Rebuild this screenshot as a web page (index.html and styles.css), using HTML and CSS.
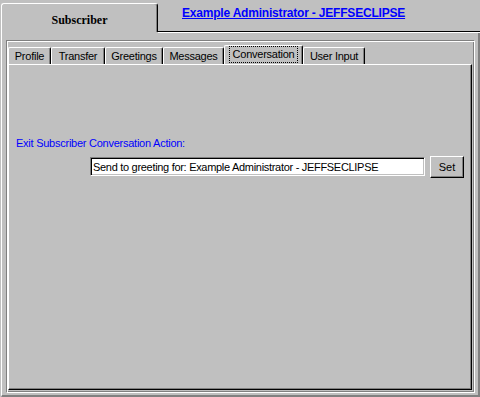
FILE: index.html
```html
<!DOCTYPE html>
<html lang="en">
<head>
  <meta charset="UTF-8">
  <meta name="viewport" content="width=device-width, initial-scale=1">
  <title>Subscriber</title>
  <link rel="stylesheet" href="styles.css">
</head>
<body>

  <div class="header">
    <div class="main-tab">Subscriber</div>
    <div class="header-rest">
      <a href="#" class="admin-link">Example Administrator - JEFFSECLIPSE</a>
    </div>
  </div>

  <div class="frame">
    <div class="group">
      <div class="tabs">
        <div class="tab tab-profile">Profile</div>
        <div class="tab tab-transfer">Transfer</div>
        <div class="tab tab-greetings">Greetings</div>
        <div class="tab tab-messages">Messages</div>
        <div class="tab tab-conversation active"><span class="focus">Conversation</span></div>
        <div class="tab tab-input">User Input</div>
      </div>
      <div class="panel">
        <label class="field-label" for="action">Exit Subscriber Conversation Action:</label>
        <div class="field-row">
          <input id="action" class="text-box" type="text" value="Send to greeting for: Example Administrator - JEFFSECLIPSE">
          <button class="btn">Set</button>
        </div>
      </div>
    </div>
  </div>

</body>
</html>
```

FILE: styles.css
```css
html, body {
  margin: 0;
  padding: 0;
}
body {
  background: #c0c0c0;
  width: 480px;
  height: 397px;
  overflow: hidden;
  font-family: "Liberation Sans", Arial, sans-serif;
  font-size: 11px;
  letter-spacing: -0.25px;
  color: #000;
}
.header {
  display: flex;
  height: 32px;
}
.main-tab {
  box-sizing: border-box;
  width: 157px;
  height: 29px;
  margin-top: 3px;
  margin-left: 1px;
  border-top: 1px solid #fff;
  border-left: 1px solid #fff;
  border-right: 1px solid #000;
  box-shadow: inset -1px 0 0 #808080;
  border-radius: 3px 3px 0 0;
  text-align: center;
  padding-top: 9px;
  font-family: "Liberation Serif", "Times New Roman", serif;
  font-weight: bold;
  font-size: 12px;
  letter-spacing: 0;
}
.header-rest {
  flex: 1;
  border-bottom: 1px solid #000;
  box-shadow: 0 1px 0 #fff;
  padding-left: 24px;
  padding-top: 6px;
}
.admin-link {
  color: #0000ff;
  font-weight: bold;
  font-size: 12px;
  letter-spacing: -0.2px;
}
.frame {
  box-sizing: border-box;
  height: 365px;
  margin-left: 1px;
  border-left: 1px solid #fff;
  border-right: 2px solid #808080;
  border-bottom: 2px solid #808080;
  padding: 8px 3px 2px 4px;
}
.group {
  box-sizing: border-box;
  height: 353px;
  border: 1px solid;
  border-color: #808080 #fff #fff #808080;
  box-shadow: inset 1px 1px 0 #fff, inset -1px -1px 0 #808080;
  padding: 2px 2px 2px 1px;
  display: flex;
  flex-direction: column;
}
.tabs {
  display: flex;
  align-items: flex-end;
  height: 21px;
}
.tab {
  box-sizing: border-box;
  height: 17px;
  padding-top: 1px;
  border-top: 1px solid #fff;
  border-left: 1px solid #fff;
  border-right: 1px solid #000;
  box-shadow: inset -1px 0 0 #808080;
  border-radius: 2px 2px 0 0;
  line-height: 14px;
  text-align: center;
  white-space: nowrap;
}
.tab-profile { width: 43px; }
.tab-transfer { width: 54px; }
.tab-greetings { width: 58px; }
.tab-messages { width: 61px; }
.tab-conversation { width: 79px; }
.tab-input { width: 62px; }
.tab.active {
  height: 19px;
}
.focus {
  display: inline-block;
  outline: 1px dotted #000;
  padding: 1px 3px 1px 3px;
  line-height: 13px;
}
.panel {
  flex: 1;
  border-top: 1px solid #fff;
  border-left: 1px solid #fff;
  border-right: 1px solid #000;
  border-bottom: 1px solid #000;
  box-shadow: inset -1px -1px 0 #808080;
  padding-top: 72px;
  padding-left: 7px;
}
.field-label {
  display: block;
  color: #0000ff;
  line-height: 13px;
}
.field-row {
  display: flex;
  align-items: flex-start;
  gap: 5px;
  margin-top: 6px;
  padding-left: 74px;
}
.text-box {
  box-sizing: border-box;
  width: 335px;
  height: 19px;
  margin-top: 1px;
  padding: 0 2px;
  border: 1px solid;
  border-color: #808080 #fff #fff #808080;
  box-shadow: inset 1px 1px 0 #000, inset -1px -1px 0 #c0c0c0;
  background: #fff;
  font-family: "Liberation Sans", Arial, sans-serif;
  font-size: 11px;
  letter-spacing: -0.3px;
  color: #000;
  outline: none;
}
.btn {
  box-sizing: border-box;
  width: 34px;
  height: 22px;
  padding: 0;
  border: 1px solid;
  border-color: #fff #000 #000 #fff;
  box-shadow: inset -1px -1px 0 #808080;
  background: #c0c0c0;
  font-family: "Liberation Sans", Arial, sans-serif;
  font-size: 11px;
  color: #000;
}
```
